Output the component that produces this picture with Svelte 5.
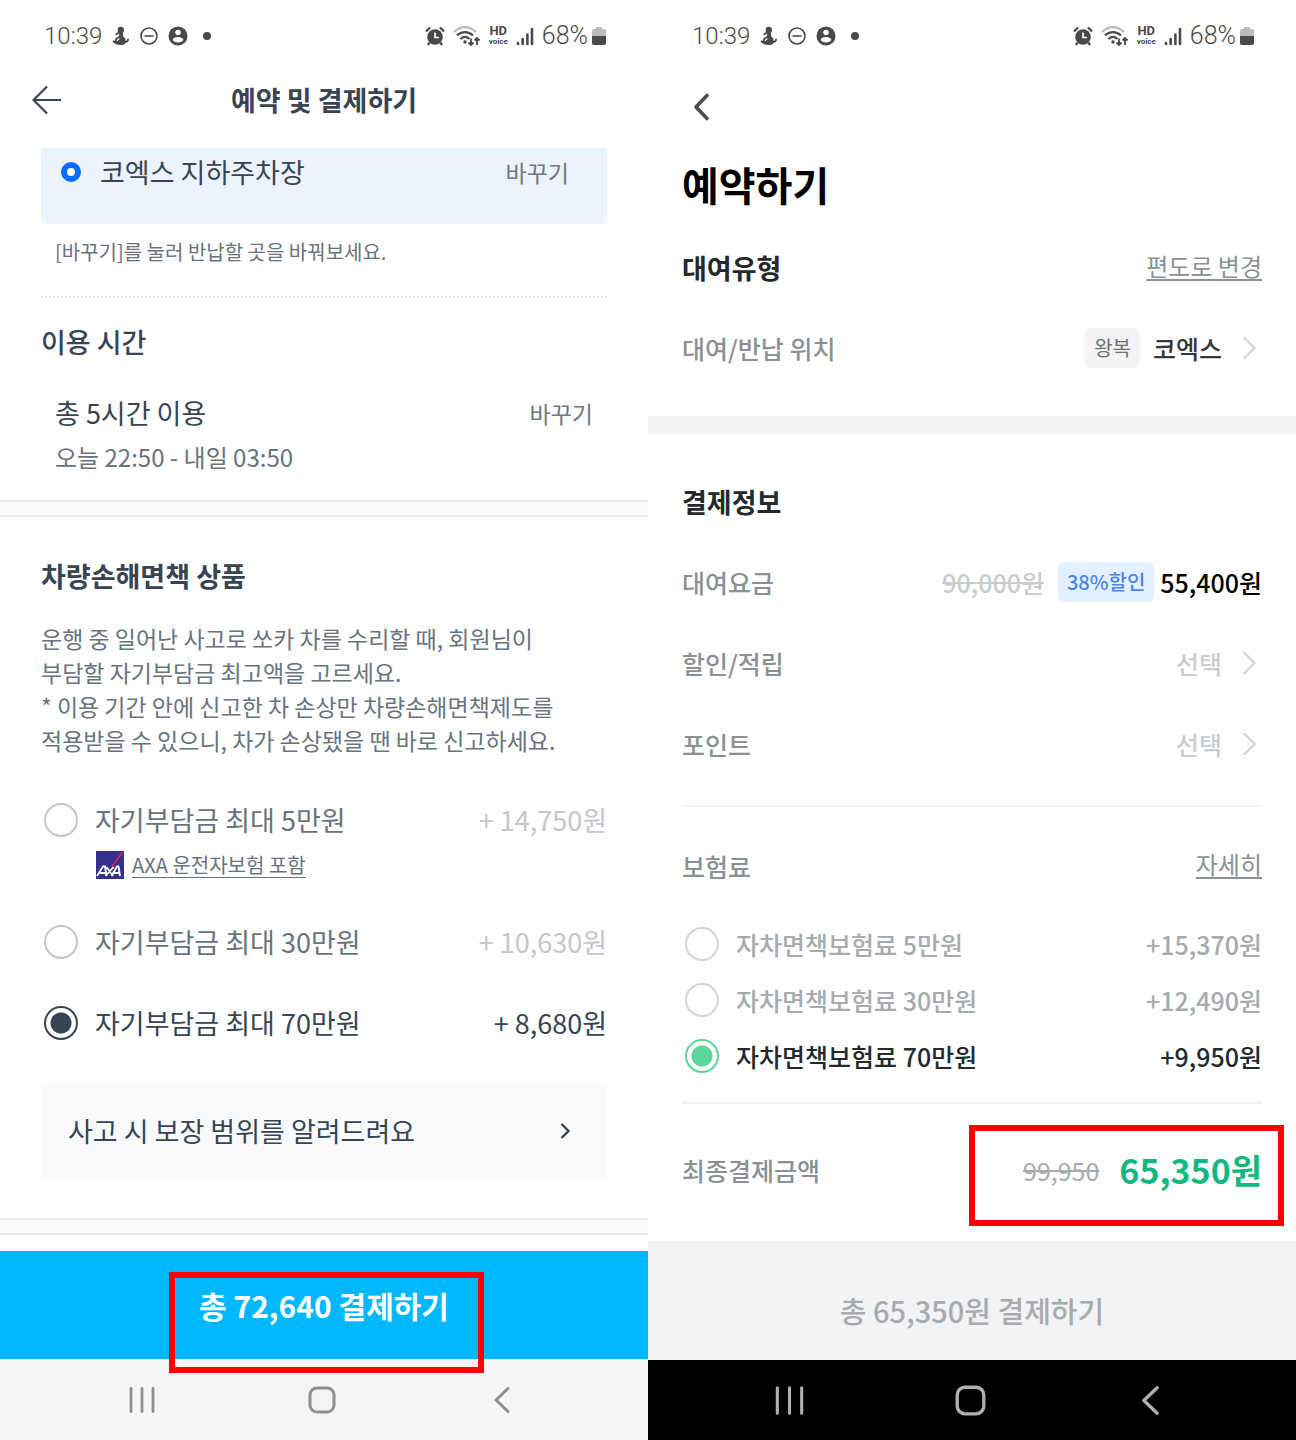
<script lang="ts">
	type Plan = { value: string; label: string; price: string; insurer?: string };

	const socarPlans: Plan[] = [
		{ value: '5', label: '자기부담금 최대 5만원', price: '+ 14,750원', insurer: 'AXA 운전자보험 포함' },
		{ value: '30', label: '자기부담금 최대 30만원', price: '+ 10,630원' },
		{ value: '70', label: '자기부담금 최대 70만원', price: '+ 8,680원' }
	];

	const greenPlans: Plan[] = [
		{ value: '5', label: '자차면책보험료 5만원', price: '+15,370원' },
		{ value: '30', label: '자차면책보험료 30만원', price: '+12,490원' },
		{ value: '70', label: '자차면책보험료 70만원', price: '+9,950원' }
	];

	let socarPlan = $state('70');
	let greenPlan = $state('70');
</script>

{#snippet statusBar()}
	<div class="status">
		<div class="status-left">
			<span class="clock">10:39</span>
			<svg width="18" height="20" viewBox="0 0 18 20" fill="currentColor" aria-hidden="true">
				<circle cx="8.800" cy="4" r="3.200" />
				<path d="M7 6.500h4l.3 4.200c1.700.9 2.500 2.400 2.300 4.300 1.100-.3 1.700-1.200 1.800-2.500l1.600.2c0 2.400-1.200 3.900-3.400 4.300-1 1.400-2.600 2-5.100 2-2.700 0-4.700-.5-6-1.700L.5 15.800l1-1.500 1.200.6c.2-2.300 1.600-4 4.300-4.600z" />
				<path d="M3.500 8.500L8 6" stroke="currentColor" stroke-width="1.800" />
				<path d="M5.200 14.800c.3-1.200 1-1.800 2.200-2" fill="none" stroke="#fff" stroke-width="1.200" />
			</svg>
			<svg width="18" height="18" viewBox="0 0 18 18" fill="none" stroke="currentColor" stroke-width="1.600" aria-hidden="true">
				<circle cx="9" cy="9" r="8" />
				<path d="M4.500 9h9" />
			</svg>
			<svg width="20" height="20" viewBox="0 0 20 20" aria-hidden="true">
				<circle cx="10" cy="10" r="9.500" fill="currentColor" />
				<circle cx="10" cy="6.500" r="2.800" fill="#fff" />
				<path d="M4.500 14c.8-2.300 3-3 5.500-3s4.700.7 5.500 3c-1.500 1.700-3.300 2.500-5.500 2.500s-4-.8-5.500-2.500z" fill="#fff" />
			</svg>
			<span class="more-dot"></span>
		</div>
		<div class="status-right">
			<svg width="20" height="20" viewBox="0 0 20 20" aria-hidden="true">
				<circle cx="10" cy="11" r="7.800" fill="currentColor" />
				<path d="M1 5.500l4-4M19 5.500l-4-4M4.500 16.500L3 19M15.500 16.500L17 19" stroke="currentColor" stroke-width="2.400" fill="none" />
				<path d="M10 6.500v5h4" stroke="#fff" stroke-width="1.700" fill="none" />
			</svg>
			<svg width="28" height="22" viewBox="0 0 28 22" fill="none" stroke="currentColor" stroke-width="2.200" aria-hidden="true">
				<path d="M1 7c6.500-6.500 15.500-6.500 22 0" stroke="#bbb" />
				<path d="M4 10.500c4.700-4.500 11.300-4.500 16 0M7.500 14c2.800-2.600 6.200-2.600 9 0" />
				<circle cx="12" cy="17" r="1.700" fill="currentColor" stroke="none" />
				<path d="M18 13.500V20M15.500 17.500L18 20l2.500-2.500M24 20v-7M21.500 15.500L24 13l2.500 2.500" stroke-width="1.800" />
			</svg>
			<span class="hd"><b>HD</b><small>voice</small></span>
			<svg width="18" height="19" viewBox="0 0 18 19" stroke="currentColor" stroke-width="2.600" stroke-linecap="round" aria-hidden="true">
				<path d="M2 16v1M6.700 12v5M11.400 7.500V17M16 2v15" />
			</svg>
			<span class="charge">68%</span>
			<svg width="14" height="20" viewBox="0 0 14 20" aria-hidden="true">
				<path d="M4 1h6v2h2a2 2 0 0 1 2 2v5H0V5a2 2 0 0 1 2-2h2z" fill="#bbb" />
				<path d="M0 10h14v7a2 2 0 0 1-2 2H2a2 2 0 0 1-2-2z" fill="currentColor" />
			</svg>
		</div>
	</div>
{/snippet}

{#snippet navBar(dark: boolean)}
	<nav class="nav" class:dark>
		<button type="button" aria-label="최근 앱">
			<svg viewBox="0 0 28 28" fill="none" stroke="currentColor" stroke-width="2.800" stroke-linecap="round">
				<path d="M3 2.500v23M14 2.500v23M25 2.500v23" />
			</svg>
		</button>
		<button type="button" aria-label="홈">
			<svg viewBox="0 0 28 28" fill="none" stroke="currentColor" stroke-width="3">
				<rect x="2" y="2" width="24" height="24" rx="7" />
			</svg>
		</button>
		<button type="button" aria-label="뒤로">
			<svg viewBox="0 0 28 28" fill="none" stroke="currentColor" stroke-width="3" stroke-linecap="round" stroke-linejoin="round">
				<path d="M20 2.500L8 14l12 11.500" />
			</svg>
		</button>
	</nav>
{/snippet}

{#snippet chevron()}
	<svg class="chevron" width="14" height="24" viewBox="0 0 14 24" fill="none" stroke="currentColor" stroke-width="2.400" aria-hidden="true">
		<path d="M1.500 1L12.500 12l-11 11" />
	</svg>
{/snippet}

<main class="compare">
	<section class="phone socar">
		{@render statusBar()}
		<header class="top">
			<button type="button" class="back" aria-label="뒤로">
				<svg width="30" height="30" viewBox="0 0 30 30" fill="none" stroke="currentColor" stroke-width="2.200">
					<path d="M15 1.500L1.500 15 15 28.500M1.500 15H29" />
				</svg>
			</button>
			<h1>예약 및 결제하기</h1>
		</header>

		<div class="body">
			<div class="place">
				<span class="pin"></span>
				<span class="place-name">코엑스 지하주차장</span>
				<button type="button" class="change">바꾸기</button>
			</div>
			<p class="hint">[바꾸기]를 눌러 반납할 곳을 바꿔보세요.</p>

			<h2 class="time-title">이용 시간</h2>
			<div class="time">
				<div>
					<p class="total-time">총 5시간 이용</p>
					<p class="period">오늘 22:50 - 내일 03:50</p>
				</div>
				<button type="button" class="change">바꾸기</button>
			</div>
		</div>

		<div class="band"></div>

		<div class="body insurance">
			<h2>차량손해면책 상품</h2>
			<p class="desc">
				운행 중 일어난 사고로 쏘카 차를 수리할 때, 회원님이<br />
				부담할 자기부담금 최고액을 고르세요.<br />
				* 이용 기간 안에 신고한 차 손상만 차량손해면책제도를<br />
				적용받을 수 있으니, 차가 손상됐을 땐 바로 신고하세요.
			</p>
			<div class="plans">
				{#each socarPlans as plan (plan.value)}
					<div class="plan">
						<label class:on={socarPlan === plan.value}>
							<input type="radio" name="socar-plan" value={plan.value} bind:group={socarPlan} />
							<span class="label">{plan.label}</span>
							<span class="price">{plan.price}</span>
						</label>
						{#if plan.insurer}
							<a class="insurer" href="#axa">
								<svg width="28" height="28" viewBox="0 0 28 28" aria-hidden="true">
									<rect width="28" height="28" fill="#35308f" />
									<path d="M16 15.500L26.500 1" stroke="#d8274c" stroke-width="1.600" />
									<path d="M1 25l6-9.500h2l1.500 9.500M4 22h6M10.500 16l6.500 9M9.500 25l8-9M15.500 25l5.500-9.500h1.500L24 25M18 22h6" fill="none" stroke="#fff" stroke-width="1.800" />
								</svg>
								<span>{plan.insurer}</span>
							</a>
						{/if}
					</div>
				{/each}
			</div>
			<button type="button" class="coverage">
				<span>사고 시 보장 범위를 알려드려요</span>
				<svg width="12" height="18" viewBox="0 0 12 18" fill="none" stroke="currentColor" stroke-width="2.400" aria-hidden="true">
					<path d="M2.500 2l7 7-7 7" />
				</svg>
			</button>
		</div>

		<div class="band"></div>

		<div class="pay-wrap">
			<button type="button" class="pay">총 72,640 결제하기</button>
			<span class="mark"></span>
		</div>
		{@render navBar(false)}
	</section>

	<section class="phone green">
		{@render statusBar()}
		<div class="body">
			<button type="button" class="back" aria-label="뒤로">
				<svg width="20" height="30" viewBox="0 0 20 30" fill="none" stroke="currentColor" stroke-width="3.600" stroke-linecap="round" stroke-linejoin="round">
					<path d="M16 3.500L5 15l11 11.500" />
				</svg>
			</button>
			<h1>예약하기</h1>
			<div class="row">
				<h2>대여유형</h2>
				<a href="#oneway">편도로 변경</a>
			</div>
			<div class="row location">
				<span>대여/반납 위치</span>
				<button type="button" class="pick strong">
					<span class="tag">왕복</span>
					<span>코엑스</span>
					{@render chevron()}
				</button>
			</div>
		</div>

		<div class="gap"></div>

		<div class="body payment">
			<h2>결제정보</h2>
			<div class="row">
				<span>대여요금</span>
				<span class="fare">
					<del>90,000원</del>
					<span class="tag sale">38%할인</span>
					<strong>55,400원</strong>
				</span>
			</div>
			<div class="row option">
				<span>할인/적립</span>
				<button type="button" class="pick">
					<span>선택</span>
					{@render chevron()}
				</button>
			</div>
			<div class="row option">
				<span>포인트</span>
				<button type="button" class="pick">
					<span>선택</span>
					{@render chevron()}
				</button>
			</div>
			<hr />
			<div class="row premium">
				<span>보험료</span>
				<a href="#detail">자세히</a>
			</div>
			<div class="plans">
				{#each greenPlans as plan (plan.value)}
					<label class:on={greenPlan === plan.value}>
						<input type="radio" name="green-plan" value={plan.value} bind:group={greenPlan} />
						<span class="label">{plan.label}</span>
						<span class="price">{plan.price}</span>
					</label>
				{/each}
			</div>
			<hr />
			<div class="row total">
				<span>최종결제금액</span>
				<span class="sum">
					<del>99,950</del>
					<strong>65,350원</strong>
				</span>
				<span class="mark"></span>
			</div>
		</div>

		<div class="gap"></div>
		<button type="button" class="pay" disabled>총 65,350원 결제하기</button>
		{@render navBar(true)}
	</section>
</main>

<style>
	:global(body) {
		margin: 0;
		background: #fff;
	}

	.compare {
		display: grid;
		grid-template-columns: 1fr 1fr;
		font-family: 'Noto Sans CJK KR', 'Noto Sans', sans-serif;
		font-size: 27px;
		line-height: 40px;
		color: #374553;
	}

	.phone {
		display: flex;
		flex-direction: column;
		min-width: 0;
		min-height: 100vh;
		background: #fefefe;
	}

	h1,
	h2,
	p {
		margin: 0;
		font-size: inherit;
	}

	button {
		padding: 0;
		border: 0;
		background: none;
		font: inherit;
		color: inherit;
		cursor: pointer;
	}

	svg {
		display: block;
		flex: none;
	}

	/* status bar */
	.status {
		display: flex;
		justify-content: space-between;
		align-items: center;
		height: 72px;
		padding: 0 42px 0 44px;
		font-family: Roboto, sans-serif;
		font-size: 24px;
		font-weight: 300;
		color: #4a4a4a;
	}

	.status-left,
	.status-right {
		display: flex;
		align-items: center;
		gap: 10px;
	}

	.status-right {
		gap: 8px;
	}

	.more-dot {
		width: 8px;
		height: 8px;
		margin-left: 5px;
		border-radius: 50%;
		background: currentColor;
	}

	.charge {
		margin-right: -4px;
		font-size: 25px;
	}

	.hd {
		display: flex;
		flex-direction: column;
		align-items: center;
		font-size: 13px;
		line-height: 12px;
	}

	.hd b {
		font-weight: 700;
	}

	.hd small {
		font-size: 8px;
		line-height: 10px;
		font-weight: 700;
	}

	/* android navigation */
	.nav {
		display: grid;
		grid-template-columns: repeat(3, 28%);
		justify-content: center;
		flex: 1;
		min-height: 80px;
		padding-right: 4px;
		background: #f5f5f5;
		color: #8f8f8f;
	}

	.nav button {
		display: flex;
		justify-content: center;
		align-items: center;
	}

	.nav svg {
		width: 28px;
		height: 28px;
	}

	.nav.dark {
		background: #000;
		color: #b0b0b0;
	}

	.nav.dark svg {
		width: 31px;
		height: 31px;
	}

	input[type='radio'] {
		appearance: none;
		flex: none;
		width: 34px;
		height: 34px;
		margin: 0;
		border: 2px solid #c4c7cb;
		border-radius: 50%;
	}

	label {
		display: flex;
		align-items: center;
		gap: 17px;
		padding-left: 3px;
	}

	.label {
		flex: 1;
	}

	.mark {
		position: absolute;
		box-sizing: border-box;
		width: 315px;
		height: 101px;
		border: 6px solid #f00;
		pointer-events: none;
	}

	/* left app */
	.socar .body {
		padding: 0 41px;
	}

	.top {
		display: grid;
		grid-template-columns: 30px 1fr 30px;
		align-items: center;
		padding: 8px 32px 28px;
		text-align: center;
	}

	.top h1 {
		font-weight: 700;
	}

	.place {
		display: flex;
		align-items: center;
		padding: 4px 38px 32px 20px;
		border-radius: 0 0 6px 6px;
		background: #ecf2fe;
	}

	.pin {
		box-sizing: border-box;
		width: 20px;
		height: 20px;
		margin-right: 19px;
		border: 6px solid #0a6cff;
		border-radius: 50%;
		background: #fff;
	}

	.place-name {
		flex: 1;
	}

	.change {
		font-size: 23px;
		color: #6f7780;
	}

	.hint {
		padding: 12px 14px 28px;
		border-bottom: 2px dotted #e6e8ea;
		font-size: 20px;
		line-height: 32px;
		color: #69737d;
	}

	.time-title {
		margin-top: 24px;
		font-weight: 500;
	}

	.time {
		display: flex;
		justify-content: space-between;
		align-items: flex-start;
		padding: 31px 14px 27px;
	}

	.period {
		margin-top: 8px;
		font-size: 24px;
		line-height: 32px;
		color: #69737d;
	}

	.band {
		height: 13px;
		border: solid #ececee;
		border-width: 2px 0;
		background: #f8f9fb;
	}

	.socar .insurance {
		padding-top: 39px;
		padding-bottom: 39px;
	}

	.insurance h2 {
		font-weight: 700;
	}

	.desc {
		margin-top: 25px;
		font-size: 23px;
		line-height: 34px;
		color: #69737d;
		white-space: nowrap;
	}

	.socar .plans {
		display: flex;
		flex-direction: column;
		gap: 41px;
		margin: 43px 0 41px;
		color: #69737d;
	}

	.socar .price {
		color: #c4c7cb;
	}

	.socar .on,
	.socar .on .price {
		color: #374553;
	}

	.socar input:checked {
		border-color: #374553;
		background: radial-gradient(circle, #374553 10px, transparent 11px);
	}

	.insurer {
		display: flex;
		align-items: center;
		gap: 8px;
		width: fit-content;
		margin: 9px 0 0 55px;
		font-size: 20px;
		line-height: 32px;
		color: #69737d;
		text-decoration: none;
	}

	.insurer span {
		text-decoration: underline;
		text-decoration-thickness: 1px;
		text-underline-offset: 4px;
	}

	.coverage {
		display: flex;
		justify-content: space-between;
		align-items: center;
		width: 100%;
		padding: 27px 36px 28px 27px;
		background: #f8f9fb;
	}

	.pay-wrap {
		position: relative;
		margin-top: 16px;
	}

	.pay {
		width: 100%;
		padding: 34px 0;
		background: #00b8ff;
		font-size: 30px;
		font-weight: 700;
		color: #fff;
	}

	.pay-wrap .mark {
		top: 21px;
		left: calc(50% - 155px);
	}

	/* right app */
	.green .body {
		padding: 0 34px;
		font-size: 25px;
		font-weight: 500;
		color: #8b9193;
	}

	.green .back {
		display: flex;
		align-items: center;
		height: 40px;
		margin: 15px 0 33px 9px;
		color: #4c5052;
	}

	.green h1 {
		font-size: 40px;
		line-height: 48px;
		font-weight: 700;
		color: #000;
	}

	.green h2 {
		font-size: 27px;
		font-weight: 700;
		color: #25292c;
	}

	.row {
		display: flex;
		justify-content: space-between;
		align-items: center;
		margin-top: 40px;
	}

	.green a {
		align-self: flex-start;
		font-size: 24px;
		line-height: 36px;
		font-weight: 400;
		color: #8b9193;
		text-decoration-thickness: 2px;
		text-underline-offset: 3px;
	}

	.location {
		margin-bottom: 48px;
	}

	.option {
		margin-top: 41px;
	}

	.pick,
	.fare,
	.sum {
		display: flex;
		align-items: center;
	}

	.pick {
		color: #c9cdcf;
	}

	.pick.strong {
		color: #33383b;
	}

	.chevron {
		margin: 0 6px 0 20px;
		color: #d5d8da;
	}

	.tag {
		padding: 0 9px;
		margin-right: 13px;
		border-radius: 6px;
		background: #f2f3f5;
		font-size: 20px;
		font-weight: 400;
		color: #6c7174;
	}

	.sale {
		margin: 0 6px 0 14px;
		background: #e3f0ff;
		font-weight: 500;
		color: #4a86e8;
	}

	.fare del {
		color: #c9cdcf;
	}

	.fare strong {
		font-weight: 500;
		color: #000;
	}

	.gap {
		height: 18px;
		background: #f2f3f5;
	}

	.payment h2 {
		margin-top: 48px;
	}

	hr {
		height: 2px;
		margin: 41px 0 0;
		border: 0;
		background: #f1f3f3;
	}

	.premium {
		margin-top: 39px;
	}

	.green .plans {
		display: flex;
		flex-direction: column;
		gap: 16px;
		margin: 38px 0 26px;
		color: #a6abad;
	}

	.green .plans + hr {
		margin-top: 0;
	}

	.green input {
		border-color: #d2d6d8;
	}

	.green input:checked {
		border-color: #5bd69a;
		background: radial-gradient(circle, #5bd69a 10px, transparent 11px);
	}

	.green .on {
		color: #25292c;
	}

	.total {
		position: relative;
		margin: 46px 0 51px;
	}

	.sum {
		gap: 20px;
	}

	.sum del {
		font-weight: 400;
		color: #a6abad;
	}

	.sum strong {
		font-size: 34px;
		font-weight: 700;
		color: #12b981;
	}

	.total .mark {
		top: -25px;
		right: -22px;
	}

	.green .pay {
		padding: 30px 0;
		border-top: 1px solid #f6f7f8;
		background: #f2f3f5;
		font-size: 29px;
		font-weight: 500;
		color: #a6abad;
	}
</style>
